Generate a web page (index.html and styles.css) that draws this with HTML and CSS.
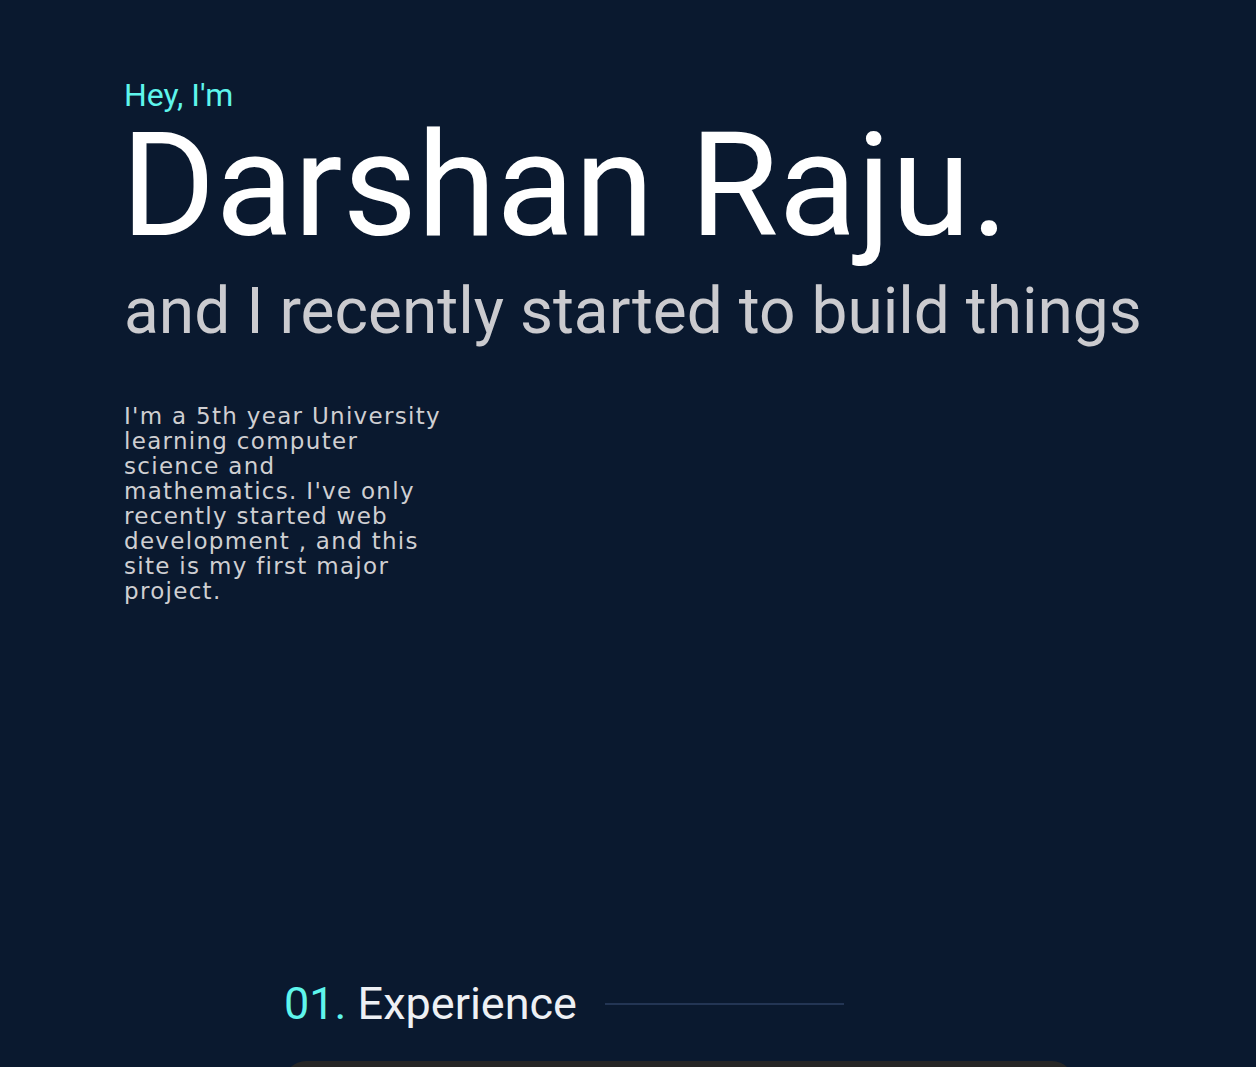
FILE: index.html
```html
<!DOCTYPE html>
<html lang="en">
<head>
<meta charset="utf-8">
<title>Darshan Raju</title>
<link rel="stylesheet" href="styles.css">
</head>
<body>
<main class="page">
  <section class="hero">
    <p class="hero-greet">Hey, I'm</p>
    <h1 class="hero-name">Darshan Raju.</h1>
    <h2 class="hero-sub">and I recently started to build things</h2>
    <p class="hero-about">I'm a 5th year University learning computer science and mathematics. I've only recently started web development , and this site is my first major project.</p>
  </section>
  <section class="experience">
    <h3 class="section-title"><span class="section-num">01.</span> Experience<span class="section-line"></span></h3>
    <div class="exp-card"></div>
  </section>
</main>
</body>
</html>
```
FILE: styles.css
```css
html, body {
  margin: 0;
  padding: 0;
  background: #0a192f;
}
body {
  font-family: Roboto, "Liberation Sans", sans-serif;
  overflow: hidden;
  height: 1067px;
}
.page {
  display: flex;
  flex-direction: column;
}
.hero {
  padding: 79px 0 0 124px;
  display: flex;
  flex-direction: column;
  align-items: flex-start;
}
.hero-greet {
  margin: 0;
  font-size: 32px;
  line-height: 1;
  font-weight: 400;
  color: #5ef5ec;
}
.hero-name {
  margin: 3px 0 0 -3px;
  font-size: 144px;
  line-height: 1;
  font-weight: 400;
  color: #ffffff;
}
.hero-sub {
  margin: 22px 0 0 0;
  font-size: 64px;
  line-height: 1;
  font-weight: 400;
  color: #cbcbcf;
  white-space: nowrap;
}
.hero-about {
  margin: 60px 0 0 0;
  width: 330px;
  font-family: "DejaVu Sans", sans-serif;
  font-size: 23px;
  line-height: 25px;
  letter-spacing: 1.3px;
  color: #cfcfd2;
}
.experience {
  padding: 377px 0 0 284px;
  display: flex;
  flex-direction: column;
  align-items: flex-start;
}
.section-title {
  margin: 0;
  display: flex;
  align-items: center;
  font-size: 45px;
  line-height: 1;
  font-weight: 400;
  color: #eef0f4;
  white-space: pre;
}
.section-num {
  color: #5ef5ec;
}
.section-line {
  display: block;
  width: 239px;
  height: 2px;
  margin-left: 28px;
  background: #233554;
}
.exp-card {
  margin-top: 35px;
  width: 790px;
  height: 120px;
  background: #262626;
  border-radius: 22px 22px 0 0;
}
```
